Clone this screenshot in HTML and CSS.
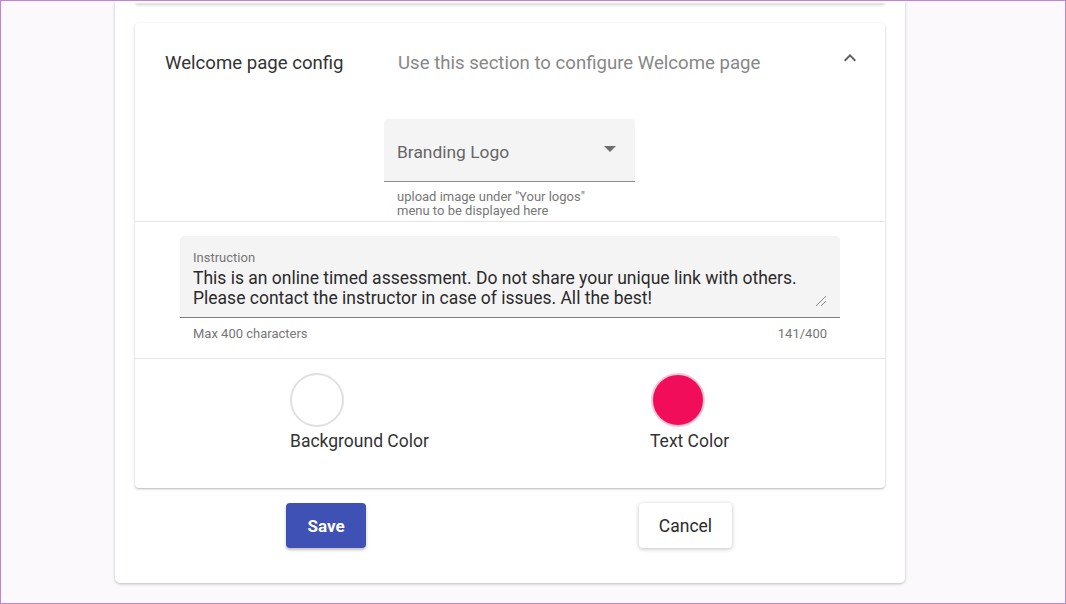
FILE: index.html
```html
<!DOCTYPE html>
<html lang="en">

<head>
    <meta charset="UTF-8">
    <meta name="viewport" content="width=device-width, initial-scale=1.0">
    <title>Welcome page config</title>
    <link rel="stylesheet" href="styles.css">
</head>

<body>
    <div class="page">
        <div class="outer-card">
            <div class="prev-card"></div>

            <div class="panel">
                <div class="panel-header">
                    <div class="panel-title">Welcome page config</div>
                    <div class="panel-desc">Use this section to configure Welcome page</div>
                    <svg class="chevron" width="24" height="24" viewBox="0 0 24 24">
                        <path d="M12 8l-6 6 1.41 1.41L12 10.83l4.59 4.58L18 14z" fill="#616161" />
                    </svg>
                </div>

                <div class="logo-section">
                    <div class="select-field">
                        <span class="select-value">Branding Logo</span>
                        <svg class="select-arrow" width="12" height="6" viewBox="0 0 12 6">
                            <path d="M0 0h12L6 6z" fill="#6e6e6e" />
                        </svg>
                    </div>
                    <div class="field-hint">upload image under "Your logos"<br>menu to be displayed here</div>
                </div>

                <div class="divider"></div>

                <div class="instruction-section">
                    <div class="text-field">
                        <div class="field-label">Instruction</div>
                        <div class="field-text">This is an online timed assessment. Do not share your unique link with others. Please contact the instructor in case of issues. All the best!</div>
                        <svg class="resize-handle" width="12" height="12" viewBox="0 0 12 12">
                            <path d="M11 1L1 11M11 6L6 11" stroke="#8a8a8a" stroke-width="1" />
                        </svg>
                    </div>
                    <div class="hint-row">
                        <span>Max 400 characters</span>
                        <span>141/400</span>
                    </div>
                </div>

                <div class="divider"></div>

                <div class="color-row">
                    <div class="color-item">
                        <div class="swatch swatch-bg"></div>
                        <div class="color-label">Background Color</div>
                    </div>
                    <div class="color-item">
                        <div class="swatch swatch-text"></div>
                        <div class="color-label">Text Color</div>
                    </div>
                </div>
            </div>

            <div class="actions">
                <div class="action-cell">
                    <button class="btn btn-save">Save</button>
                </div>
                <div class="action-cell">
                    <button class="btn btn-cancel">Cancel</button>
                </div>
            </div>
        </div>
    </div>
</body>

</html>
```

FILE: styles.css
```css
html,
body {
    margin: 0;
    padding: 0;
}

body {
    font-family: Roboto, "Noto Sans", sans-serif;
    background-color: #fbf9fc;
}

.page {
    width: 1066px;
    height: 604px;
    box-sizing: border-box;
    border: 1px solid #c083d6;
    padding-left: 114px;
    overflow: hidden;
}

.outer-card {
    width: 790px;
    box-sizing: border-box;
    background-color: #ffffff;
    border-radius: 0 0 5px 5px;
    box-shadow: 0 1px 3px rgba(0, 0, 0, 0.25);
    padding: 0 20px 35px 20px;
}

.prev-card {
    height: 2px;
    background-color: #ffffff;
    border-radius: 0 0 4px 4px;
    box-shadow: 0 2px 3px rgba(0, 0, 0, 0.22);
}

.panel {
    margin-top: 20px;
    background-color: #ffffff;
    border-radius: 4px;
    box-shadow: 0 1px 3px rgba(0, 0, 0, 0.2), 0 1px 1px rgba(0, 0, 0, 0.1);
}

.panel-header {
    display: flex;
    align-items: center;
    padding: 28px 23px 0 30px;
    height: 24px;
}

.panel-title {
    width: 233px;
    font-size: 18.6px;
    color: #333333;
}

.panel-desc {
    flex: 1;
    font-size: 18.6px;
    color: #878787;
}

.chevron {
    margin-top: -10px;
}

.logo-section {
    padding: 44px 0 0 249px;
}

.select-field {
    width: 251px;
    height: 63px;
    box-sizing: border-box;
    background-color: #f5f4f5;
    border-bottom: 1px solid #8c8c8c;
    border-radius: 4px 4px 0 0;
    display: flex;
    align-items: center;
    justify-content: space-between;
    padding: 3px 19px 0 13px;
}

.select-value {
    font-size: 17.4px;
    color: #666666;
}

.select-arrow {
    margin-top: -6px;
}

.field-hint {
    margin: 8px 0 3px 13px;
    font-size: 13px;
    line-height: 14px;
    color: #777777;
}

.divider {
    height: 1px;
    background-color: #e6e6e6;
}

.instruction-section {
    padding: 14px 45px 17px 45px;
}

.text-field {
    position: relative;
    background-color: #f5f4f5;
    border-bottom: 1px solid #7d7d7d;
    border-radius: 4px 4px 0 0;
    padding: 15px 13px 9px 13px;
}

.field-label {
    font-size: 13px;
    line-height: 14px;
    color: #757575;
}

.field-text {
    margin-top: 3px;
    font-size: 17.5px;
    line-height: 20px;
    color: #2b2b2b;
    padding-right: 20px;
}

.resize-handle {
    position: absolute;
    right: 13px;
    bottom: 10px;
}

.hint-row {
    display: flex;
    justify-content: space-between;
    margin-top: 9px;
    padding: 0 13px;
    font-size: 13px;
    line-height: 14px;
    color: #777777;
}

.color-row {
    display: grid;
    grid-template-columns: 360px 1fr;
    padding: 14px 0 36px 155px;
}

.color-item {
    display: flex;
    flex-direction: column;
    align-items: flex-start;
}

.swatch {
    width: 54px;
    height: 54px;
    box-sizing: border-box;
    border-radius: 50%;
}

.swatch-bg {
    background-color: #ffffff;
    border: 2px solid #e0e0e0;
}

.swatch-text {
    margin-left: 1px;
    background-color: #f20d5a;
    border: 2px solid #f5c6d8;
}

.color-label {
    margin-top: 3px;
    font-size: 17.5px;
    line-height: 22px;
    color: #333333;
}

.actions {
    display: grid;
    grid-template-columns: 353px 1fr;
    padding: 15px 0 0 151px;
}

.btn {
    height: 45px;
    border: none;
    border-radius: 4px;
    font-family: Roboto, "Noto Sans", sans-serif;
    font-size: 17.5px;
    cursor: pointer;
}

.btn-save {
    width: 80px;
    background-color: #3f51b5;
    color: #ffffff;
    font-weight: 700;
    font-size: 17px;
    box-shadow: 0 2px 3px rgba(0, 0, 0, 0.25);
}

.btn-cancel {
    width: 93px;
    background-color: #ffffff;
    color: #2b2b2b;
    box-shadow: 0 1px 4px rgba(0, 0, 0, 0.25);
}
```
